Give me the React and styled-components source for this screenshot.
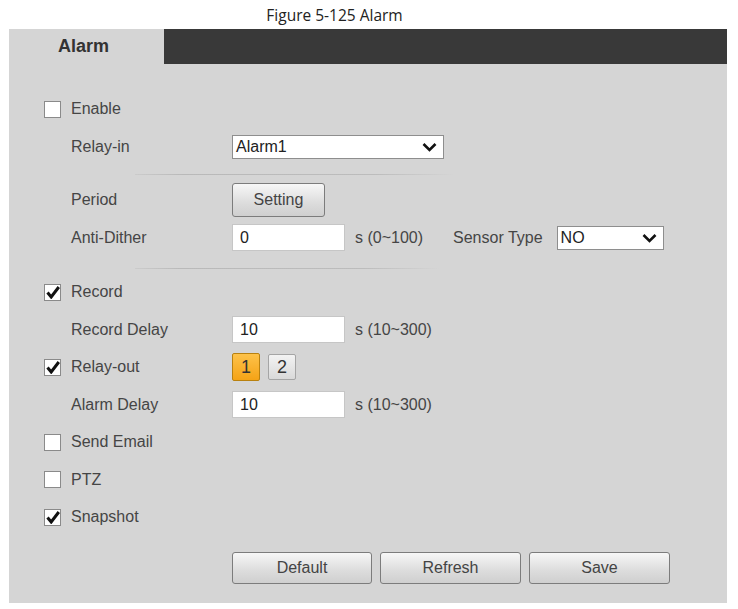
import React from 'react'
import styled, { createGlobalStyle } from 'styled-components'

const GlobalStyle = createGlobalStyle`
  body {
    margin: 0;
    background: #fff;
    font-family: "Liberation Sans", Arial, sans-serif;
  }
`

const Page = styled.div`
  width: 738px;
  height: 609px;
  display: flex;
  flex-direction: column;
`

const Caption = styled.div`
  height: 29px;
  display: flex;
  align-items: center;
  justify-content: center;
  padding-right: 69px;
  font-family: "Open Sans", "Noto Sans", sans-serif;
  font-size: 15.5px;
  color: #222;
  box-sizing: border-box;
`

const Panel = styled.div`
  margin-left: 9px;
  width: 718px;
  background: #d5d5d5;
  display: flex;
  flex-direction: column;
`

const TabBar = styled.div`
  height: 35px;
  display: flex;
  background: #393939;
`

const Tab = styled.div`
  width: 155px;
  background: #d5d5d5;
  display: flex;
  align-items: center;
  padding-left: 49px;
  box-sizing: border-box;
  font-size: 18px;
  font-weight: bold;
  color: #333;
`

const Form = styled.div`
  display: flex;
  flex-direction: column;
  padding: 26.5px 0 19px 0;
`

const Row = styled.div`
  height: 37.5px;
  display: flex;
  align-items: center;
`

const LabelCell = styled.div`
  width: 223px;
  display: flex;
  align-items: center;
  padding-left: 35px;
  box-sizing: border-box;
  font-size: 16px;
  color: #454545;
`

const Label = styled.span`
  margin-left: ${p => (p.$indent ? '27px' : '10px')};
`

const Aside = styled.span`
  margin-left: 20px;
`

const Box = styled.span`
  width: 17px;
  height: 17px;
  box-sizing: border-box;
  border: 1px solid #8a8a8a;
  background: #fff;
  display: inline-flex;
  align-items: center;
  justify-content: center;
`

const Controls = styled.div`
  display: flex;
  align-items: center;
  gap: ${p => p.$gap || 10}px;
  font-size: 16px;
  color: #454545;
`

const Select = styled.div`
  width: ${p => p.$w}px;
  height: 24px;
  margin-left: ${p => p.$ml || 0}px;
  box-sizing: border-box;
  border: 1px solid #8e8e8e;
  background: #fff;
  display: flex;
  align-items: center;
  justify-content: space-between;
  padding: 0 6px 0 3px;
  font-size: 16px;
  color: #222;
`

const Input = styled.div`
  width: 113px;
  height: 27px;
  box-sizing: border-box;
  border: 1px solid #c6c6c6;
  background: #fff;
  display: flex;
  align-items: center;
  padding-left: 7px;
  font-size: 16px;
  color: #222;
`

const GrayButton = styled.div`
  width: ${p => p.$w}px;
  height: ${p => p.$h}px;
  box-sizing: border-box;
  border: 1px solid #7c7c7c;
  border-radius: 3px;
  background: linear-gradient(#f7f7f7, #dcdcdc 60%, #cfcfcf);
  display: flex;
  align-items: center;
  justify-content: center;
  font-size: 16px;
  color: #444;
`

const NumButton = styled.div`
  width: 28px;
  height: ${p => (p.$on ? 28 : 26)}px;
  box-sizing: border-box;
  border: 1px solid ${p => (p.$on ? '#b9810f' : '#a5a5a5')};
  border-radius: 2px;
  background: ${p =>
    p.$on ? 'linear-gradient(#fdc24a, #f5a316)' : 'linear-gradient(#f3f3f3, #d9d9d9)'};
  display: flex;
  align-items: center;
  justify-content: center;
  font-size: 18px;
  color: #333;
`

const Separator = styled.div`
  height: ${p => p.$h}px;
  display: flex;
  flex-direction: column;
  justify-content: flex-end;
  padding-bottom: ${p => p.$pb}px;
  box-sizing: border-box;
  &::after {
    content: '';
    display: block;
    margin-left: 126px;
    width: ${p => p.$w}px;
    height: 1px;
    background: linear-gradient(to right, rgba(180,180,180,0.3), #b9b9b9 15%, #bcbcbc 75%, rgba(200,200,200,0));
  }
`

const ButtonRow = styled.div`
  display: flex;
  gap: 8px;
  padding-left: 223px;
  margin-top: 16px;
`

const Chevron = () => (
  <svg width="15" height="10" viewBox="0 0 15 10">
    <path d="M1.5 2 L7.5 8 L13.5 2" fill="none" stroke="#111" strokeWidth="2.6" />
  </svg>
)

const Check = ({ on }) => (
  <Box>
    {on && (
      <svg width="14" height="13" viewBox="0 0 14 13">
        <path d="M1.5 6.5 L5.2 11 L12.8 1" fill="none" stroke="#111" strokeWidth="3" />
      </svg>
    )}
  </Box>
)

const CheckRow = ({ label, on }) => (
  <Row>
    <LabelCell>
      <Check on={on} />
      <Label>{label}</Label>
    </LabelCell>
  </Row>
)

const FieldRow = ({ label, children, gap }) => (
  <Row>
    <LabelCell>
      <Label $indent>{label}</Label>
    </LabelCell>
    <Controls $gap={gap}>{children}</Controls>
  </Row>
)

export default function App() {
  return (
    <Page>
      <GlobalStyle />
      <Caption>Figure 5-125 Alarm</Caption>
      <Panel>
        <TabBar>
          <Tab>Alarm</Tab>
        </TabBar>
        <Form>
          <CheckRow label="Enable" />
          <FieldRow label="Relay-in">
            <Select $w={212}>
              <span>Alarm1</span>
              <Chevron />
            </Select>
          </FieldRow>
          <Separator $w={320} $h={16} $pb={7} />
          <FieldRow label="Period">
            <GrayButton $w={93} $h={34}>Setting</GrayButton>
          </FieldRow>
          <FieldRow label="Anti-Dither">
            <Input>0</Input>
            <span>s (0~100)</span>
            <Aside>Sensor Type</Aside>
            <Select $w={107} $ml={4}>
              <span>NO</span>
              <Chevron />
            </Select>
          </FieldRow>
          <Separator $w={305} $h={17} $pb={5} />
          <CheckRow label="Record" on />
          <FieldRow label="Record Delay">
            <Input>10</Input>
            <span>s (10~300)</span>
          </FieldRow>
          <Row>
            <LabelCell>
              <Check on />
              <Label>Relay-out</Label>
            </LabelCell>
            <Controls $gap={8}>
              <NumButton $on>1</NumButton>
              <NumButton>2</NumButton>
            </Controls>
          </Row>
          <FieldRow label="Alarm Delay">
            <Input>10</Input>
            <span>s (10~300)</span>
          </FieldRow>
          <CheckRow label="Send Email" />
          <CheckRow label="PTZ" />
          <CheckRow label="Snapshot" on />
          <ButtonRow>
            <GrayButton $w={140} $h={32}>Default</GrayButton>
            <GrayButton $w={141} $h={32}>Refresh</GrayButton>
            <GrayButton $w={141} $h={32}>Save</GrayButton>
          </ButtonRow>
        </Form>
      </Panel>
    </Page>
  )
}
